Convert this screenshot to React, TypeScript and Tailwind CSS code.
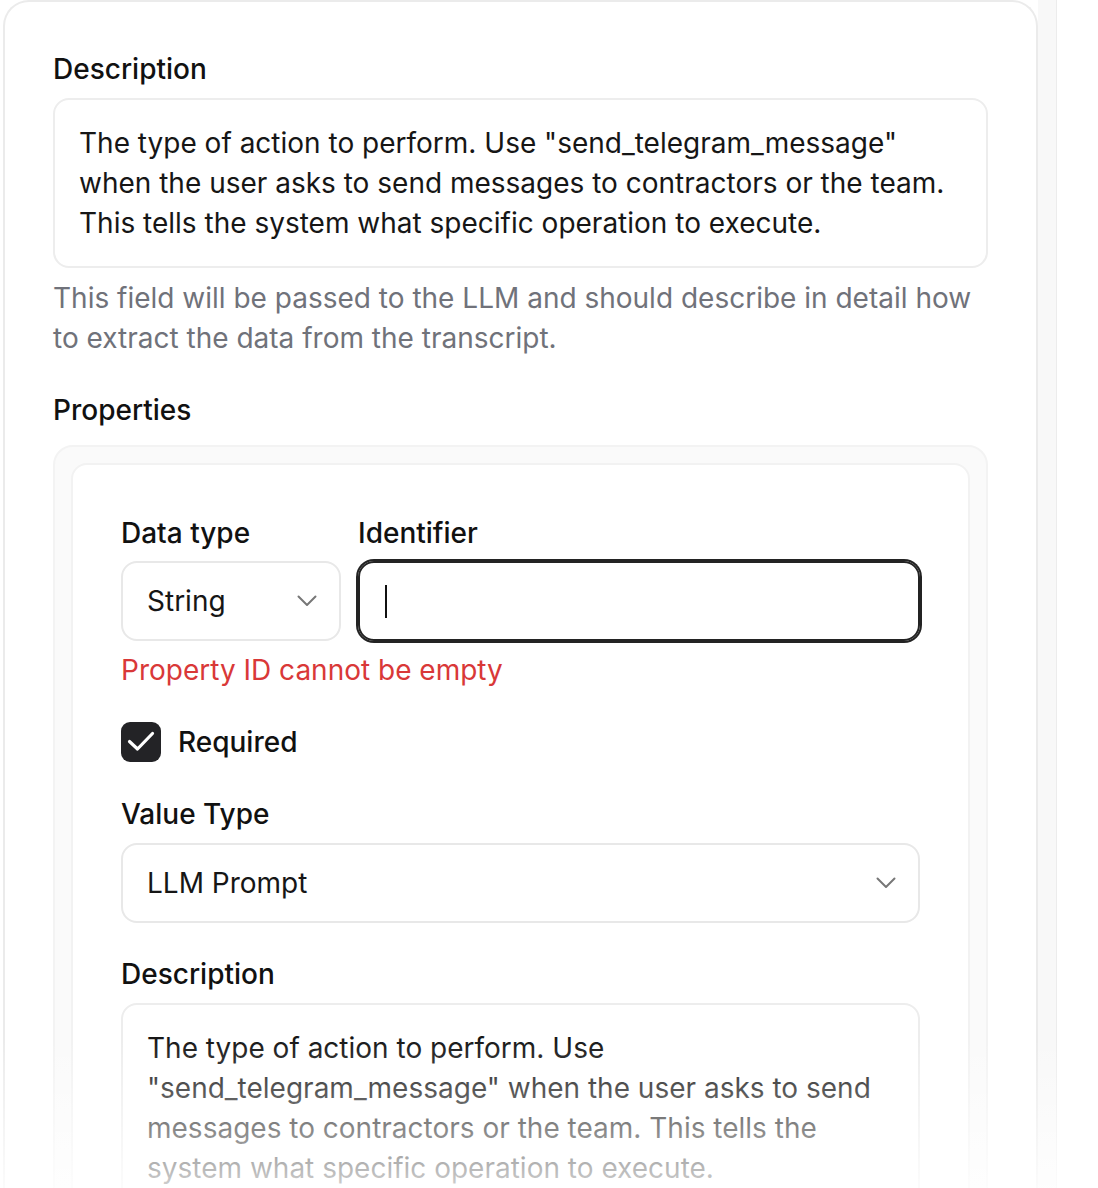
import React from 'react';

function Chevron() {
    return (
        <svg width="20" height="12" viewBox="0 0 20 12" fill="none" className="shrink-0">
            <path d="M1.5 1.5 10 10l8.5-8.5" stroke="#777777" strokeWidth="2" strokeLinecap="round" strokeLinejoin="round" />
        </svg>
    );
}

function Label({ children }: { children: React.ReactNode }) {
    return <div className="text-[28px] leading-[40px] font-medium text-[#111111]">{children}</div>;
}

export default function App() {
    return (
        <div className="relative flex h-[1188px] overflow-hidden bg-white font-['Inter',sans-serif] text-[28px] leading-[40px] text-[#161616]">
            {/* Main card */}
            <div className="ml-[3px] w-[1035px] shrink-0 rounded-t-[26px] border-2 border-b-0 border-[#ebebeb] px-12 pt-[47px]">
                <Label>Description</Label>
                <div className="mt-[9px] rounded-[16px] border-2 border-[#ededed] px-[24px] py-[23px]">
                    The type of action to perform. Use "send_telegram_message" when the user asks to send messages to contractors or the team. This tells the system what specific operation to execute.
                </div>
                <p className="mt-[10px] text-[#70727a]">
                    This field will be passed to the LLM and should describe in detail how to extract the data from the transcript.
                </p>

                <div className="mt-[32px]">
                    <Label>Properties</Label>
                </div>

                {/* Properties list */}
                <div className="mt-[15px] rounded-[20px] border-2 border-[#f3f3f3] bg-[#fafafa] p-[16px]">
                    <div className="rounded-[16px] border-2 border-[#f2f2f2] bg-white px-[48px] pt-[48px] pb-[48px]">
                        <div className="flex gap-[17px]">
                            <div className="w-[220px] shrink-0">
                                <Label>Data type</Label>
                                <div className="mt-[8px] flex h-[80px] items-center justify-between rounded-[16px] border-2 border-[#e8e8e8] pl-[24px] pr-[22px]">
                                    <span>String</span>
                                    <Chevron />
                                </div>
                            </div>
                            <div className="flex-1">
                                <Label>Identifier</Label>
                                <div className="mt-[8px] flex h-[80px] items-center rounded-[16px] border-2 border-[#232323] pl-[25px] ring-2 ring-[#232323]">
                                    <div className="h-[33px] w-[2px] bg-[#111111]" />
                                </div>
                            </div>
                        </div>

                        <p className="mt-[9px] text-[#d93838]">Property ID cannot be empty</p>

                        <div className="mt-[32px] flex items-center gap-[17px]">
                            <div className="h-[40px] w-[40px] rounded-[9px] bg-[#232326]">
                                <svg width="40" height="40" viewBox="0 0 40 40" fill="none">
                                    <path d="M8.5 19.5 16.5 27 31.5 11.5" stroke="white" strokeWidth="3.2" strokeLinecap="round" strokeLinejoin="round" />
                                </svg>
                            </div>
                            <span className="font-medium text-[#111111]">Required</span>
                        </div>

                        <div className="mt-[32px]">
                            <Label>Value Type</Label>
                        </div>
                        <div className="mt-[9px] flex h-[80px] items-center justify-between rounded-[16px] border-2 border-[#e8e8e8] pl-[24px] pr-[22px]">
                            <span>LLM Prompt</span>
                            <Chevron />
                        </div>

                        <div className="mt-[31px]">
                            <Label>Description</Label>
                        </div>
                        <div className="mt-[9px] rounded-[16px] border-2 border-[#ededed] px-[24px] py-[23px]">
                            The type of action to perform. Use "send_telegram_message" when the user asks to send messages to contractors or the team. This tells the system what specific operation to execute.
                        </div>
                    </div>
                </div>
            </div>

            {/* Scroll track */}
            <div className="w-[19px] shrink-0 border-r border-[#ececec] bg-[#f8f8f8]" />

            {/* Bottom fade */}
            <div className="pointer-events-none absolute inset-x-0 bottom-0 h-[150px] bg-gradient-to-b from-white/0 to-white/80" />
        </div>
    );
}
